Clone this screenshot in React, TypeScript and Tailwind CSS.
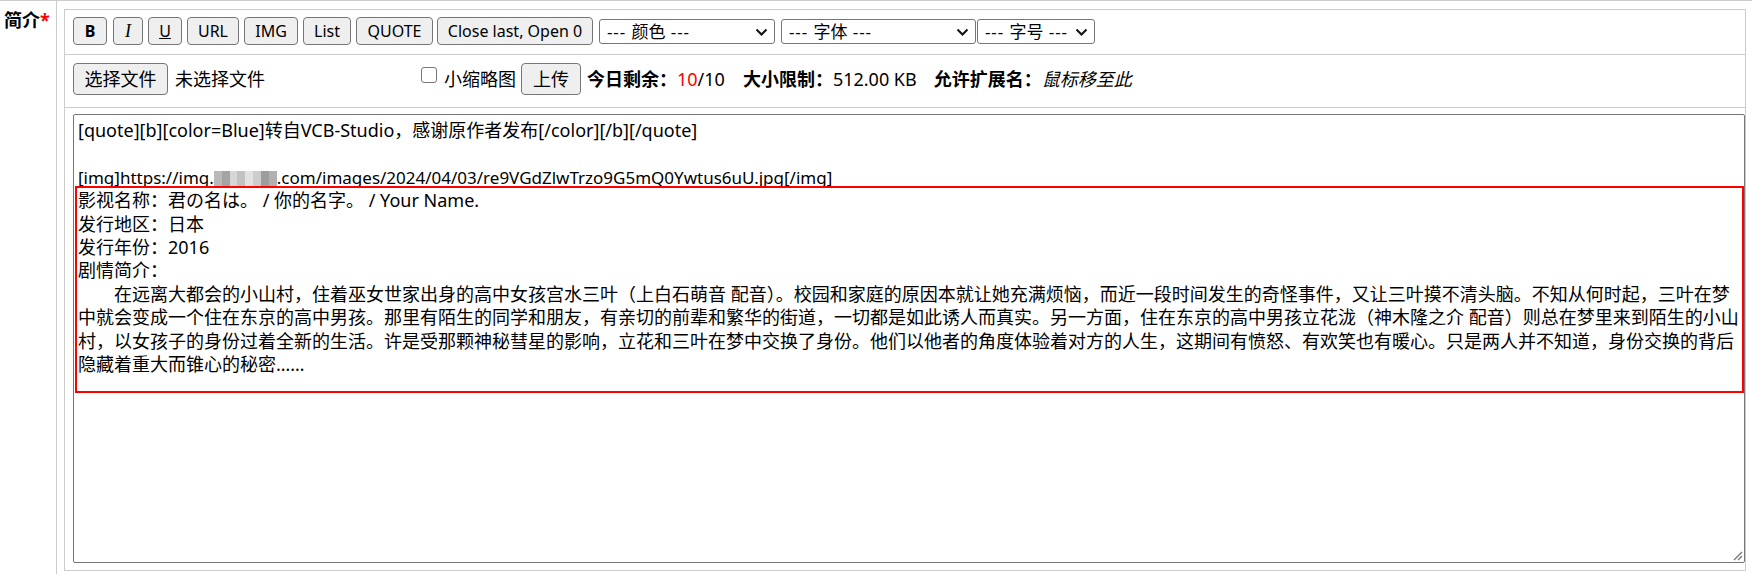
import React from 'react';

type Tool = { label: string; cls: string };

// toolbar buttons, widths and gaps taken from the screenshot
const tools: Tool[] = [
  { label: 'B', cls: 'w-[34px] font-bold' },
  { label: 'I', cls: "ml-[6px] w-[30px] italic font-['Liberation_Serif',serif] text-[18px]" },
  { label: 'U', cls: 'ml-[5px] w-[34px] underline' },
  { label: 'URL', cls: 'ml-[5px] w-[52px]' },
  { label: 'IMG', cls: 'ml-[5px] w-[54px]' },
  { label: 'List', cls: 'ml-[5px] w-[48px]' },
  { label: 'QUOTE', cls: 'ml-[5px] w-[77px]' },
  { label: 'Close last, Open 0', cls: 'ml-[4px] w-[156px]' },
];

const selects = [
  { label: '颜色', cls: 'ml-[6px] w-[176px]' },
  { label: '字体', cls: 'ml-[6px] w-[195px]' },
  { label: '字号', cls: 'ml-[1px] w-[118px]' },
];

const plotLines = [
  '影视名称：君の名は。 / 你的名字。 / Your Name.',
  '发行地区：日本',
  '发行年份：2016',
  '剧情简介：',
  '　　在远离大都会的小山村，住着巫女世家出身的高中女孩宫水三叶（上白石萌音 配音）。校园和家庭的原因本就让她充满烦恼，而近一段时间发生的奇怪事件，又让三叶摸不清头脑。不知从何时起，三叶在梦',
  '中就会变成一个住在东京的高中男孩。那里有陌生的同学和朋友，有亲切的前辈和繁华的街道，一切都是如此诱人而真实。另一方面，住在东京的高中男孩立花泷（神木隆之介 配音）则总在梦里来到陌生的小山',
  '村，以女孩子的身份过着全新的生活。许是受那颗神秘彗星的影响，立花和三叶在梦中交换了身份。他们以他者的角度体验着对方的人生，这期间有愤怒、有欢笑也有暖心。只是两人并不知道，身份交换的背后',
  '隐藏着重大而锥心的秘密……',
];

const mosaic = ['#b9b9b9', '#a4a4a4', '#d6d6d6', '#c2c2c2', '#e2e2e2', '#cdcdcd', '#9d9d9d', '#b0b0b0'];

function Chevron() {
  return (
    <svg width="13" height="8" viewBox="0 0 13 8" className="shrink-0">
      <path d="M1.5 1.5 L6.5 6.5 L11.5 1.5" fill="none" stroke="#111" strokeWidth="2" />
    </svg>
  );
}

function Toolbar() {
  return (
    <div className="flex h-[45px] items-start border-b border-[#ccc] pl-[8px] pt-[7px] text-[16px]">
      {tools.map((t) => (
        <button
          key={t.label}
          className={`flex h-[28px] items-center justify-center rounded-[4px] border border-[#767676] bg-[#efefef] ${t.cls}`}
        >
          {t.label}
        </button>
      ))}
      {selects.map((s) => (
        <div
          key={s.label}
          className={`mt-[2px] flex h-[25px] items-center justify-between rounded-[3px] border border-[#767676] bg-white pl-[7px] pr-[6px] text-[17px] ${s.cls}`}
        >
          <span className="whitespace-pre">
            <span className="tracking-[0.9px]">--- </span>
            {s.label}
            <span className="tracking-[0.9px]"> ---</span>
          </span>
          <Chevron />
        </div>
      ))}
    </div>
  );
}

function UploadRow() {
  return (
    <div className="flex h-[53px] items-start border-b border-[#ccc] pl-[8px] pt-[8px] text-[18px] leading-[32px]">
      <div className="flex w-[348px] shrink-0">
        <button className="h-[32px] w-[95px] rounded-[4px] border border-[#767676] bg-[#efefef] leading-[30px]">
          选择文件
        </button>
        <span className="ml-[7px]">未选择文件</span>
      </div>
      <span className="mt-[4px] h-[16px] w-[16px] shrink-0 rounded-[3px] border border-[#767676] bg-white" />
      <span className="ml-[7px]">小缩略图</span>
      <button className="ml-[5px] h-[32px] w-[60px] rounded-[4px] border border-[#767676] bg-[#efefef] leading-[30px]">
        上传
      </button>
      <span className="ml-[6px] font-bold">今日剩余：</span>
      <span className="text-[#ff0000]">10</span>
      <span>/10</span>
      <span className="ml-[18px] font-bold">大小限制：</span>
      <span>512.00 KB</span>
      <span className="ml-[17px] font-bold">允许扩展名：</span>
      <span className="italic">鼠标移至此</span>
    </div>
  );
}

function Editor() {
  return (
    <div className="relative ml-[8px] h-[449px] flex-1 rounded-[2px] border border-[#767676] bg-white pl-[4px] pt-[4px] text-[18px] leading-[23.4px]">
      <div className="whitespace-pre">[quote][b][color=Blue]转自VCB-Studio，感谢原作者发布[/color][/b][/quote]</div>
      <div className="h-[23.4px]" />
      <div className="whitespace-pre text-[17px]">
        [img]https://img.
        <span className="inline-flex h-[15px] w-[63px] align-[-2px]">
          {mosaic.map((c, i) => (
            <span key={i} className="h-full flex-1" style={{ backgroundColor: c }} />
          ))}
        </span>
        .com/images/2024/04/03/re9VGdZlwTrzo9G5mQ0Ywtus6uU.jpg[/img]
      </div>
      {plotLines.map((l, i) => (
        <div key={i} className="whitespace-pre">
          {l}
        </div>
      ))}

      {/* red annotation box drawn over the text */}
      <div className="pointer-events-none absolute left-[1px] top-[71px] h-[207px] w-[1669px] border-2 border-[#ff0000]" />

      <svg className="absolute bottom-[1px] right-[1px] h-[11px] w-[11px]" viewBox="0 0 11 11">
        <path d="M10 2 L2 10 M10 6 L6 10" stroke="#777" strokeWidth="1.3" />
      </svg>
    </div>
  );
}

export default function App() {
  return (
    <div className="flex h-[574px] w-[1752px] border-t border-[#ccc] bg-white text-black font-['Noto_Sans','Noto_Sans_CJK_SC',sans-serif]">
      <div className="w-[57px] shrink-0 border-r border-[#ccc] pl-[4px] pt-[7px] text-[18px] font-bold leading-[24px]">
        简介<span className="text-[#ff0000]">*</span>
      </div>
      <div className="pl-[7px] pt-[8px]">
        <div className="flex h-[562px] w-[1682px] flex-col border border-[#ccc]">
          <Toolbar />
          <UploadRow />
          <div className="flex flex-1 pt-[6px]">
            <Editor />
          </div>
        </div>
      </div>
    </div>
  );
}
